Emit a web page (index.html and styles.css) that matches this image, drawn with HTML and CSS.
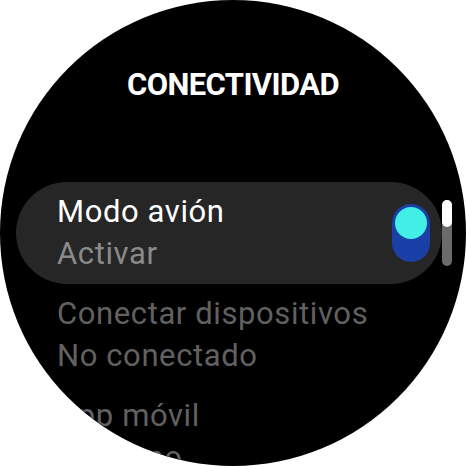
FILE: index.html
```html
<!DOCTYPE html>
<html lang="es">
<head>
<meta charset="utf-8">
<title>Conectividad</title>
<link rel="stylesheet" href="styles.css">
</head>
<body>
<div class="screen">
  <h1 class="title">CONECTIVIDAD</h1>
  <div class="list">
    <div class="item card">
      <div class="texts">
        <div class="primary">Modo avión</div>
        <div class="secondary">Activar</div>
      </div>
      <div class="toggle"><div class="knob"></div></div>
    </div>
    <div class="item">
      <div class="texts">
        <div class="primary dim">Conectar dispositivos</div>
        <div class="secondary dim">No conectado</div>
      </div>
    </div>
    <div class="item">
      <div class="texts">
        <div class="primary dim">App móvil</div>
        <div class="secondary dim">Teléfono</div>
      </div>
    </div>
  </div>
  <div class="scrollbar"><div class="thumb"></div></div>
</div>
</body>
</html>
```
FILE: styles.css
```css
html, body {
  margin: 0;
  padding: 0;
  background: #ffffff;
}
body {
  width: 466px;
  height: 466px;
  overflow: hidden;
  font-family: Roboto, "Liberation Sans", sans-serif;
}
.screen {
  position: relative;
  width: 466px;
  height: 466px;
  border-radius: 50%;
  background: #000000;
  overflow: hidden;
  padding-top: 67px;
  box-sizing: border-box;
}
.title {
  margin: 0;
  text-align: center;
  color: #ffffff;
  font-size: 31px;
  line-height: 36px;
  font-weight: 700;
  letter-spacing: -0.6px;
}
.list {
  margin-top: 79px;
  display: flex;
  flex-direction: column;
}
.item {
  display: flex;
  align-items: center;
  justify-content: space-between;
  padding: 9px 12px 9px 41px;
  margin-left: 16px;
  width: 426px;
  box-sizing: border-box;
  height: 102px;
}
.card {
  background: #262626;
  border-radius: 51px;
}
.texts {
  display: flex;
  flex-direction: column;
}
.primary, .secondary {
  font-size: 31px;
  line-height: 42px;
  letter-spacing: 0.6px;
  white-space: nowrap;
}
.primary { color: #ffffff; }
.secondary { color: #8a8a8a; }
.primary.dim, .secondary.dim { color: #616161; }
.toggle {
  width: 38px;
  height: 58px;
  border-radius: 19px;
  background: #1a3fa6;
  box-sizing: border-box;
  padding: 3px;
}
.knob {
  width: 32px;
  height: 32px;
  border-radius: 50%;
  background: #42efe6;
}
.scrollbar {
  position: absolute;
  left: 442px;
  top: 200px;
  width: 10px;
  height: 66px;
  border-radius: 5px;
  background: #6b6b6b;
}
.thumb {
  width: 10px;
  height: 27px;
  border-radius: 5px;
  background: #ffffff;
}
```
